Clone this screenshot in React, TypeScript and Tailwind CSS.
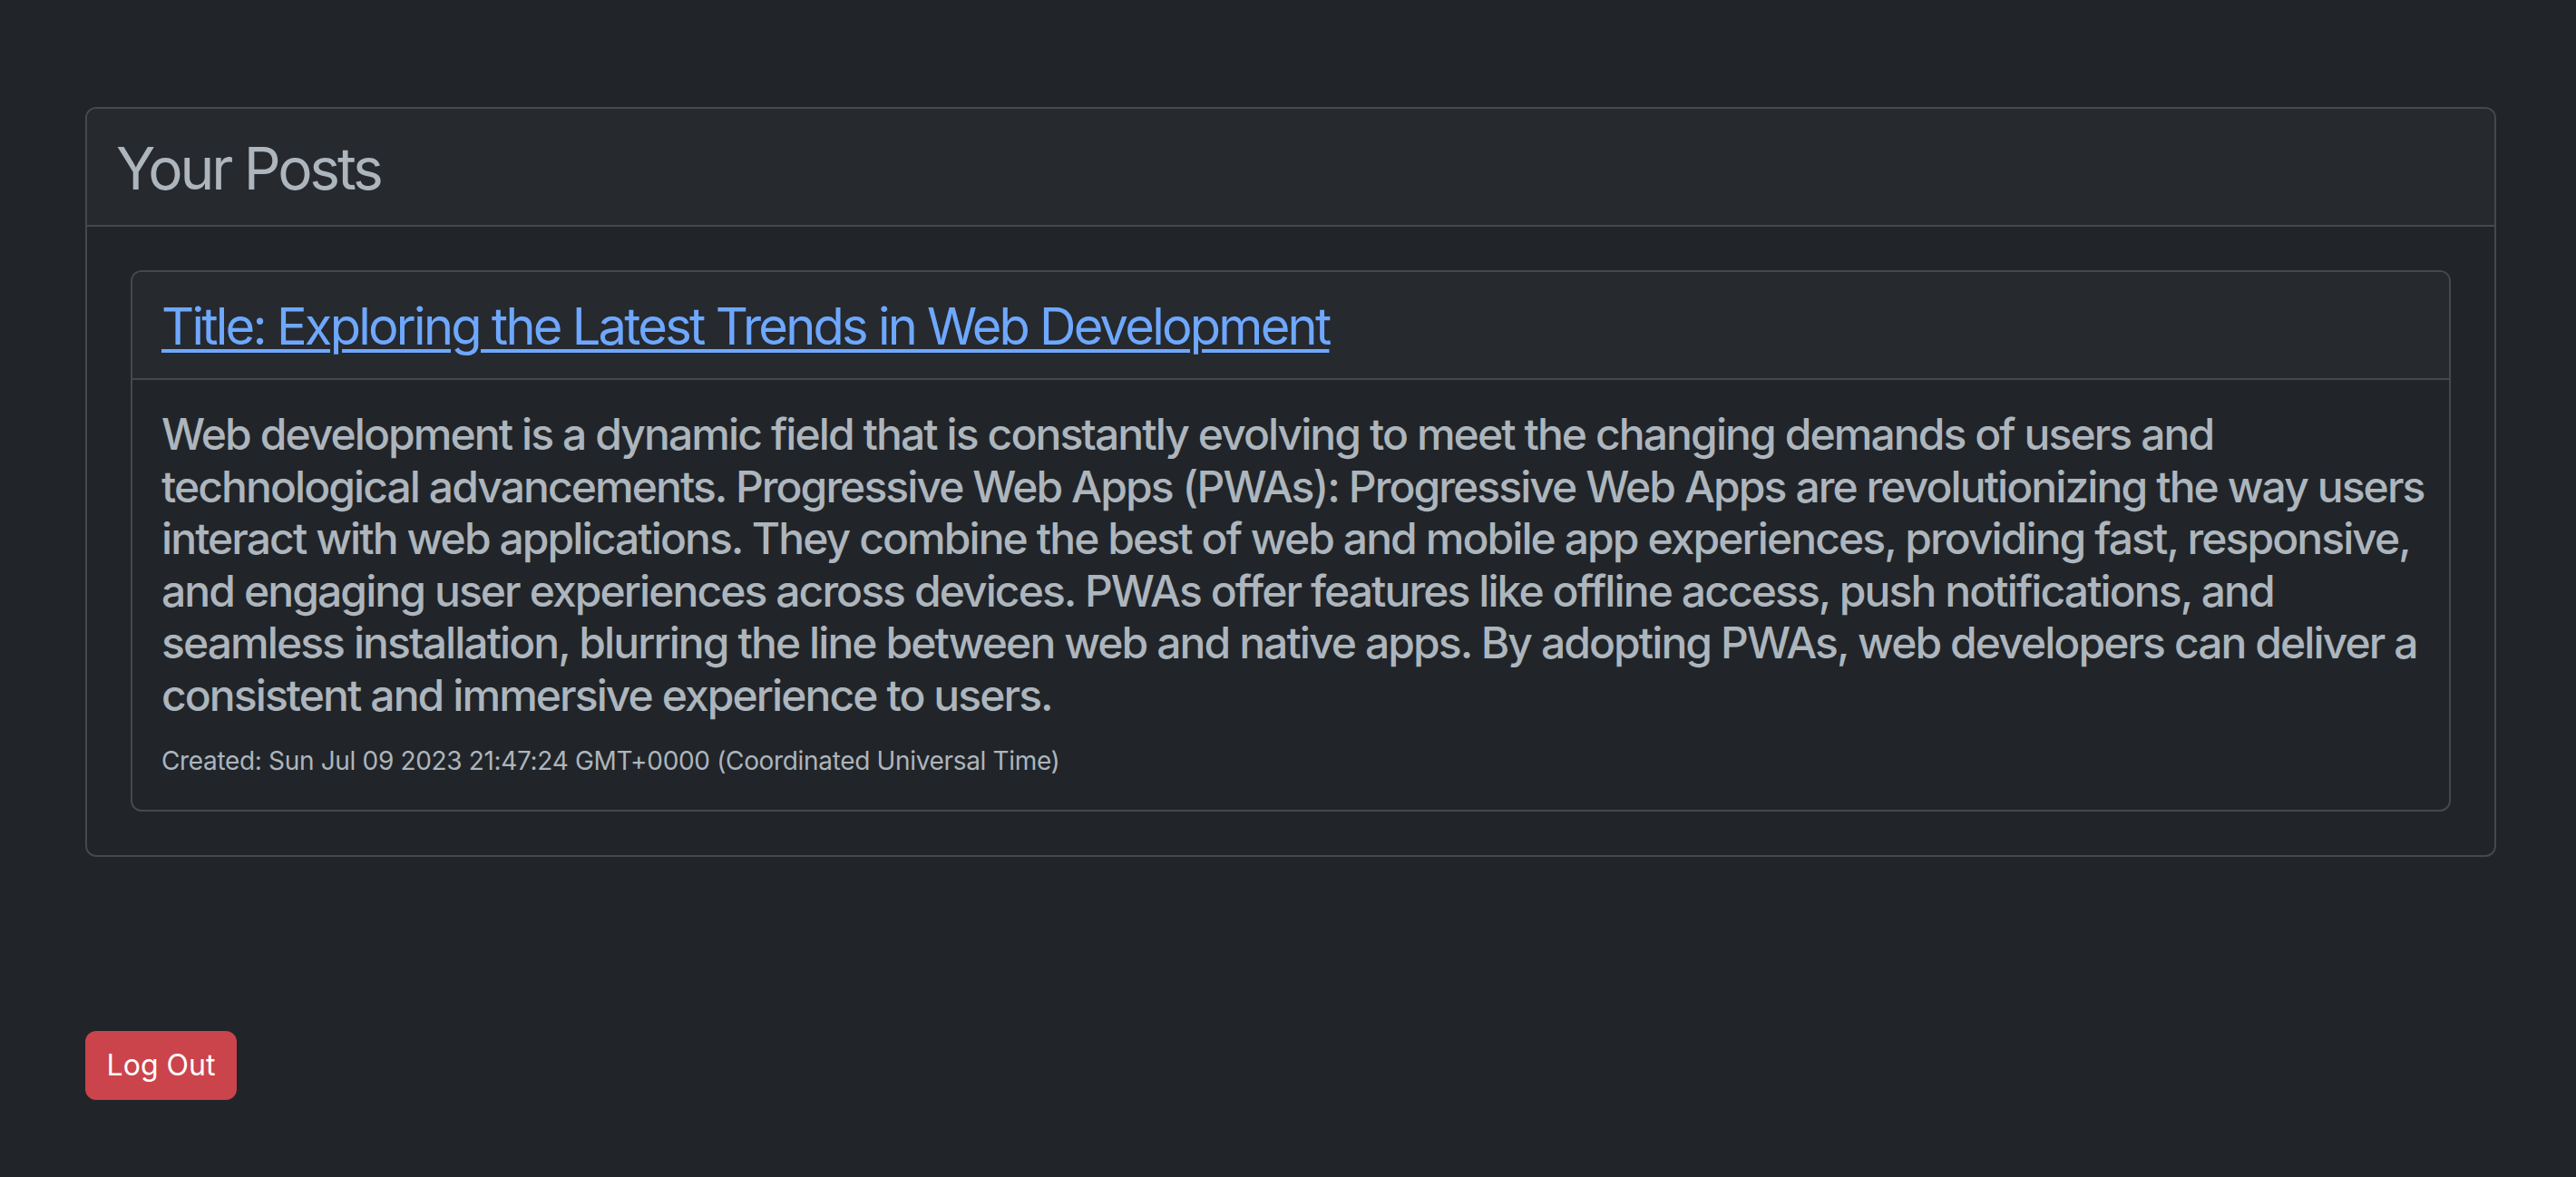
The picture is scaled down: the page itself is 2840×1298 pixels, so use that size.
import React from "react";

const lines = [
  "Web development is a dynamic field that is constantly evolving to meet the changing demands of users and",
  "technological advancements. Progressive Web Apps (PWAs): Progressive Web Apps are revolutionizing the way users",
  "interact with web applications. They combine the best of web and mobile app experiences, providing fast, responsive,",
  "and engaging user experiences across devices. PWAs offer features like offline access, push notifications, and",
  "seamless installation, blurring the line between web and native apps. By adopting PWAs, web developers can deliver a",
  "consistent and immersive experience to users.",
];

export default function App() {
  return (
    <div
      className="min-h-[1298px] w-full bg-[#212529] pt-[118px] pl-[94px] pr-[88px] text-[#adb5bd]"
      style={{ fontFamily: "Inter, 'Noto Sans', sans-serif" }}
    >
      <div className="rounded-[12px] border-2 border-[#45484c] bg-[#212529] overflow-hidden">
        <div className="border-b-2 border-[#45484c] bg-[#26292e] px-[32px] pt-[27px] pb-[24px]">
          <h2 className="text-[64px] leading-[77px] font-normal tracking-[-0.05em] text-[#adb5bd]">
            Your Posts
          </h2>
        </div>
        <div className="p-[48px]">
          <div className="rounded-[12px] border-2 border-[#45484c] overflow-hidden">
            <div className="border-b-2 border-[#45484c] bg-[#26292e] px-[32px] pt-[26px] pb-[23px]">
              <h3 className="text-[56px] leading-[68px] font-normal tracking-[-0.049em]">
                <a
                  href="#"
                  className="text-[#6ea8fe] underline decoration-[4px] underline-offset-[5px]"
                >
                  Title: Exploring the Latest Trends in Web Development
                </a>
              </h3>
            </div>
            <div className="px-[32px] pt-[31px] pb-[33px]">
              <p className="text-[48px] leading-[57.6px] font-medium tracking-[-0.04em] text-[#adb5bd]">
                {lines.map((l, i) => (
                  <span key={i} className="block whitespace-nowrap">
                    {l}
                  </span>
                ))}
              </p>
              <p className="mt-[22px] text-[28px] leading-[42px] tracking-[-0.012em] text-[#adb5bd]">
                Created: Sun Jul 09 2023 21:47:24 GMT+0000 (Coordinated Universal Time)
              </p>
            </div>
          </div>
        </div>
      </div>
      <button className="mt-[192px] flex h-[76px] w-[167px] items-center justify-center rounded-[12px] bg-[#cb444b] text-[32px] leading-[48px] text-white">
        Log Out
      </button>
    </div>
  );
}
